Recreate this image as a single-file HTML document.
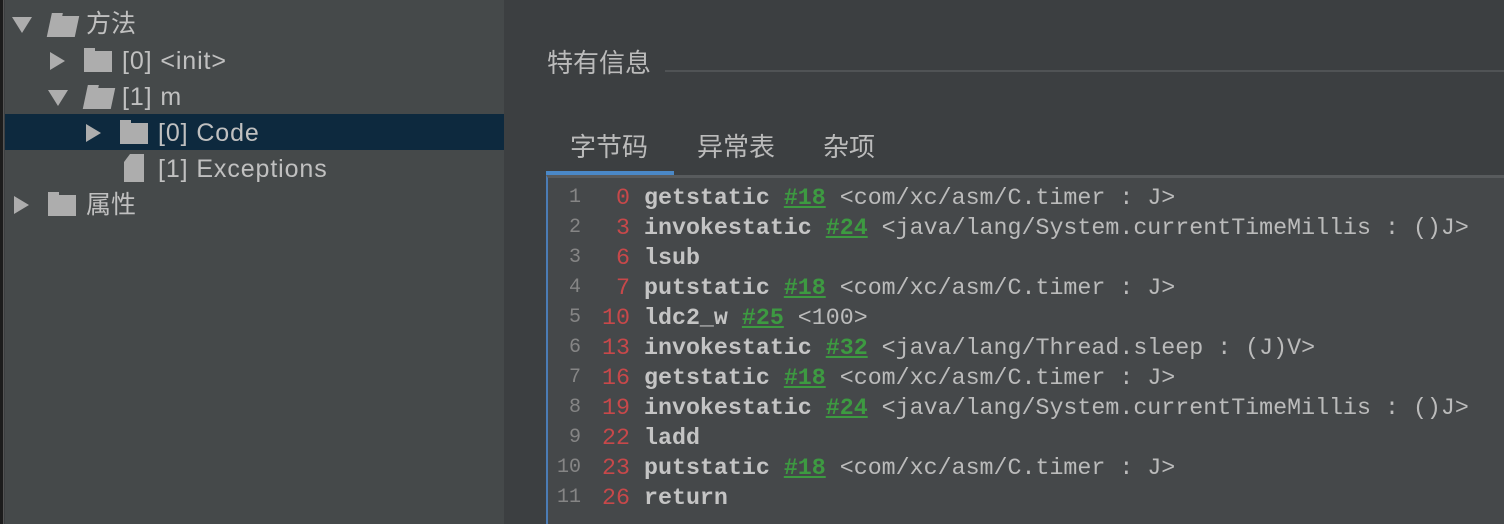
<!DOCTYPE html>
<html><head><meta charset="utf-8"><style>
*{margin:0;padding:0;box-sizing:border-box}
body{width:1504px;height:524px;background:#3c3f41;position:relative;overflow:hidden;font-family:"Liberation Sans","Noto Sans CJK SC",sans-serif;color:#bbbbbb}
.strip{position:absolute;left:0;top:0;width:4px;height:524px;background:#1c1c1c;border-right:1px solid #555}
.tree{position:absolute;left:5px;top:0;width:499px;height:524px;background:#45494a}
.row{position:absolute;height:36px;line-height:36px;font-size:25px;letter-spacing:0.9px;white-space:nowrap;color:#c0c0c0}
.cj{font-size:25px;letter-spacing:0}
.sel{position:absolute;left:5px;top:114px;width:499px;height:36px;background:#0d293e}
.tri{position:absolute;width:0;height:0}
.td{border-left:10px solid transparent;border-right:10px solid transparent;border-top:16px solid #adadad}
.tr{border-top:9px solid transparent;border-bottom:9px solid transparent;border-left:15px solid #adadad}
.fold{position:absolute;width:28px;height:21px;background:#adadad}
.fold:before{content:"";position:absolute;left:0;top:-3px;width:11px;height:3px;background:#adadad}
.code{position:absolute;left:546px;top:175px;width:958px;height:349px;background:#45484a;border-left:2px solid #4b7cb5;border-top:3px solid #585b5d}
.code:before{content:"";position:absolute;left:-2px;top:-7px;width:128px;height:4px;background:#4a88c7}
.ln{position:absolute;left:548px;font-family:"Liberation Mono",monospace;font-size:23.3px;white-space:pre;line-height:30px;height:30px}
.n{color:#858585;font-size:20px;display:inline-block;width:33px;text-align:right;vertical-align:top;line-height:30px}
.o{color:#c7484a;display:inline-block;width:49px;text-align:right;margin-right:14px}
b{color:#c4c4c4}
u{color:#3d9a41;font-weight:bold;text-decoration:underline}
.t{position:absolute;font-size:26px;color:#bbbbbb}
</style></head><body>
<div class="strip"></div>
<div class="tree"></div>
<div class="sel"></div>
<div class="tri td" style="left:12px;top:17px"></div>
<div class="fold" style="left:49px;top:16px;transform:skewX(-12deg)"></div>
<div class="row cj" style="left:86px;top:6px">方法</div>
<div class="tri tr" style="left:50px;top:52px"></div>
<div class="fold" style="left:84px;top:51px"></div>
<div class="row" style="left:122px;top:43px">[0] &lt;init&gt;</div>
<div class="tri td" style="left:48px;top:90px"></div>
<div class="fold" style="left:85px;top:88px;transform:skewX(-12deg)"></div>
<div class="row" style="left:122px;top:79px">[1] m</div>
<div class="tri tr" style="left:86px;top:124px"></div>
<div class="fold" style="left:120px;top:123px"></div>
<div class="row" style="left:158px;top:115px">[0] Code</div>
<div style="position:absolute;left:124px;top:154px;width:20px;height:28px;background:#adadad;clip-path:polygon(6px 0,100% 0,100% 100%,0 100%,0 8px)"></div>
<div class="row" style="left:158px;top:151px">[1] Exceptions</div>
<div class="tri tr" style="left:14px;top:196px"></div>
<div class="fold" style="left:48px;top:195px"></div>
<div class="row cj" style="left:86px;top:187px">属性</div>
<div class="t" style="left:547px;top:43px">特有信息</div>
<div style="position:absolute;left:665px;top:70px;width:839px;height:2px;background:#505355"></div>
<div class="t" style="left:570px;top:127px">字节码</div>
<div class="t" style="left:697px;top:127px">异常表</div>
<div class="t" style="left:823px;top:127px">杂项</div>
<div class="code"></div>
<div class="ln" style="top:183px"><span class="n">1</span><span class="o">0</span><b>getstatic</b> <u>#18</u> &lt;com/xc/asm/C.timer : J&gt;</div>
<div class="ln" style="top:213px"><span class="n">2</span><span class="o">3</span><b>invokestatic</b> <u>#24</u> &lt;java/lang/System.currentTimeMillis : ()J&gt;</div>
<div class="ln" style="top:243px"><span class="n">3</span><span class="o">6</span><b>lsub</b></div>
<div class="ln" style="top:273px"><span class="n">4</span><span class="o">7</span><b>putstatic</b> <u>#18</u> &lt;com/xc/asm/C.timer : J&gt;</div>
<div class="ln" style="top:303px"><span class="n">5</span><span class="o">10</span><b>ldc2_w</b> <u>#25</u> &lt;100&gt;</div>
<div class="ln" style="top:333px"><span class="n">6</span><span class="o">13</span><b>invokestatic</b> <u>#32</u> &lt;java/lang/Thread.sleep : (J)V&gt;</div>
<div class="ln" style="top:363px"><span class="n">7</span><span class="o">16</span><b>getstatic</b> <u>#18</u> &lt;com/xc/asm/C.timer : J&gt;</div>
<div class="ln" style="top:393px"><span class="n">8</span><span class="o">19</span><b>invokestatic</b> <u>#24</u> &lt;java/lang/System.currentTimeMillis : ()J&gt;</div>
<div class="ln" style="top:423px"><span class="n">9</span><span class="o">22</span><b>ladd</b></div>
<div class="ln" style="top:453px"><span class="n">10</span><span class="o">23</span><b>putstatic</b> <u>#18</u> &lt;com/xc/asm/C.timer : J&gt;</div>
<div class="ln" style="top:483px"><span class="n">11</span><span class="o">26</span><b>return</b></div>
</body></html>
